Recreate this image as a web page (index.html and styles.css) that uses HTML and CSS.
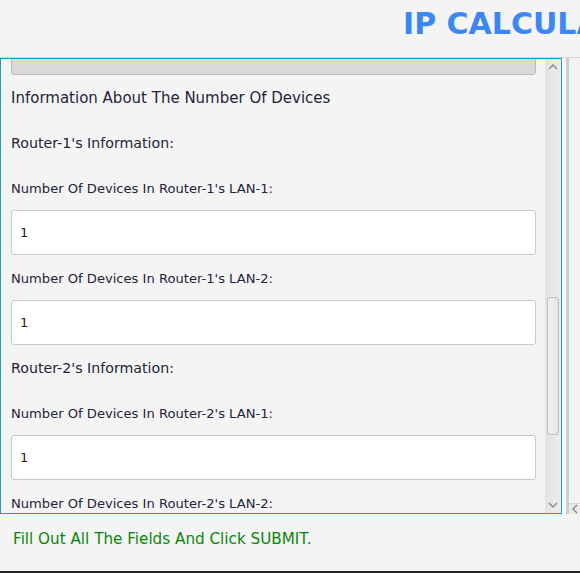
FILE: index.html
```html
<!DOCTYPE html>
<html>
<head>
<meta charset="utf-8">
<link rel="stylesheet" href="styles.css">
</head>
<body>
<div class="app">
  <header class="header"><h1 class="title">IP CALCULATOR</h1></header>
  <div class="middle">
    <div class="scrollpane">
      <div class="viewport">
        <div class="prev-bar"></div>
        <div class="row heading">Information About The Number Of Devices</div>
        <div class="row router">Router-1's Information:</div>
        <div class="row label">Number Of Devices In Router-1's LAN-1:</div>
        <div class="field">1</div>
        <div class="row label">Number Of Devices In Router-1's LAN-2:</div>
        <div class="field">1</div>
        <div class="row router">Router-2's Information:</div>
        <div class="row label">Number Of Devices In Router-2's LAN-1:</div>
        <div class="field">1</div>
        <div class="row label">Number Of Devices In Router-2's LAN-2:</div>
        <div class="field">1</div>
      </div>
      <div class="vscroll">
        <div class="arrow">
          <svg width="10" height="6" viewBox="0 0 10 6"><path d="M1 5 L5 1 L9 5" fill="none" stroke="#8a8a8a" stroke-width="1.4"/></svg>
        </div>
        <div class="track"><div class="thumb"></div></div>
        <div class="arrow">
          <svg width="10" height="6" viewBox="0 0 10 6"><path d="M1 1 L5 5 L9 1" fill="none" stroke="#8a8a8a" stroke-width="1.4"/></svg>
        </div>
      </div>
    </div>
    <div class="side">
      <div class="side-gap"></div>
      <div class="side-line"></div>
      <div class="side-panel">
        <div class="hscroll">
          <svg width="6" height="10" viewBox="0 0 6 10"><path d="M5 1 L1 5 L5 9" fill="none" stroke="#8a8a8a" stroke-width="1.4"/></svg>
        </div>
      </div>
    </div>
  </div>
  <footer class="status"><span class="status-text">Fill Out All The Fields And Click SUBMIT.</span></footer>
</div>
</body>
</html>
```
FILE: styles.css
```css
* { box-sizing: border-box; }
html, body { margin: 0; padding: 0; }
body {
  background: #f4f4f4;
  font-family: "DejaVu Sans", sans-serif;
  color: #24243a;
  width: 580px;
  height: 573px;
  overflow: hidden;
}
.app {
  display: flex;
  flex-direction: column;
  height: 573px;
}
.header {
  height: 58px;
  border-bottom: 1px solid #d2d2d2;
  overflow: hidden;
  white-space: nowrap;
  padding-left: 403px;
}
.title {
  margin: 0;
  font-size: 30px;
  font-weight: bold;
  color: #3b88f5;
  line-height: 48px;
}
.middle {
  display: flex;
  height: 456px;
}
.scrollpane {
  width: 562px;
  height: 456px;
  border: 1px solid #1e98cf;
  display: flex;
}
.viewport {
  flex: 1;
  overflow: hidden;
  padding: 0 9px 0 10px;
}
.prev-bar {
  height: 16px;
  background: #d9d9d9;
  border: 1px solid #bcbcbc;
  border-top: none;
  border-radius: 0 0 4px 4px;
}
.row {
  height: 45px;
  display: flex;
  align-items: center;
  white-space: nowrap;
  padding-top: 1px;
}
.heading { font-size: 15px; }
.router { font-size: 14.2px; }
.label { font-size: 13.1px; }
.field {
  height: 45px;
  background: #fff;
  border: 1px solid #c9c9c9;
  border-radius: 3px;
  display: flex;
  align-items: center;
  padding-left: 8px;
  font-size: 13px;
  color: #222;
}
.vscroll {
  width: 16px;
  background: linear-gradient(to right, #e3e3e3, #ececec);
  display: flex;
  flex-direction: column;
}
.arrow {
  height: 16px;
  display: flex;
  align-items: center;
  justify-content: center;
}
.track {
  flex: 1;
  padding: 222px 2px 0 2px;
}
.thumb {
  height: 138px;
  border: 1px solid #bdbdbd;
  border-radius: 3px;
  background: linear-gradient(to right, #f2f2f2, #e4e4e4);
}
.side {
  display: flex;
  width: 18px;
  height: 456px;
}
.side-gap { width: 4px; background: #f7f7f7; }
.side-line { width: 3px; background: #cdcdcd; }
.side-panel {
  flex: 1;
  background: #f3f3f3;
  display: flex;
  flex-direction: column;
  justify-content: flex-end;
}
.hscroll {
  height: 11px;
  border-top: 1px solid #d6d6d6;
  background: #e9e9e9;
  display: flex;
  align-items: center;
  padding-left: 3px;
}
.status {
  height: 59px;
  border-bottom: 2px solid #222;
  padding: 16px 0 0 13px;
}
.status-text {
  display: block;
  font-size: 15.2px;
  line-height: 18px;
  color: #0a860a;
  white-space: nowrap;
}
```
